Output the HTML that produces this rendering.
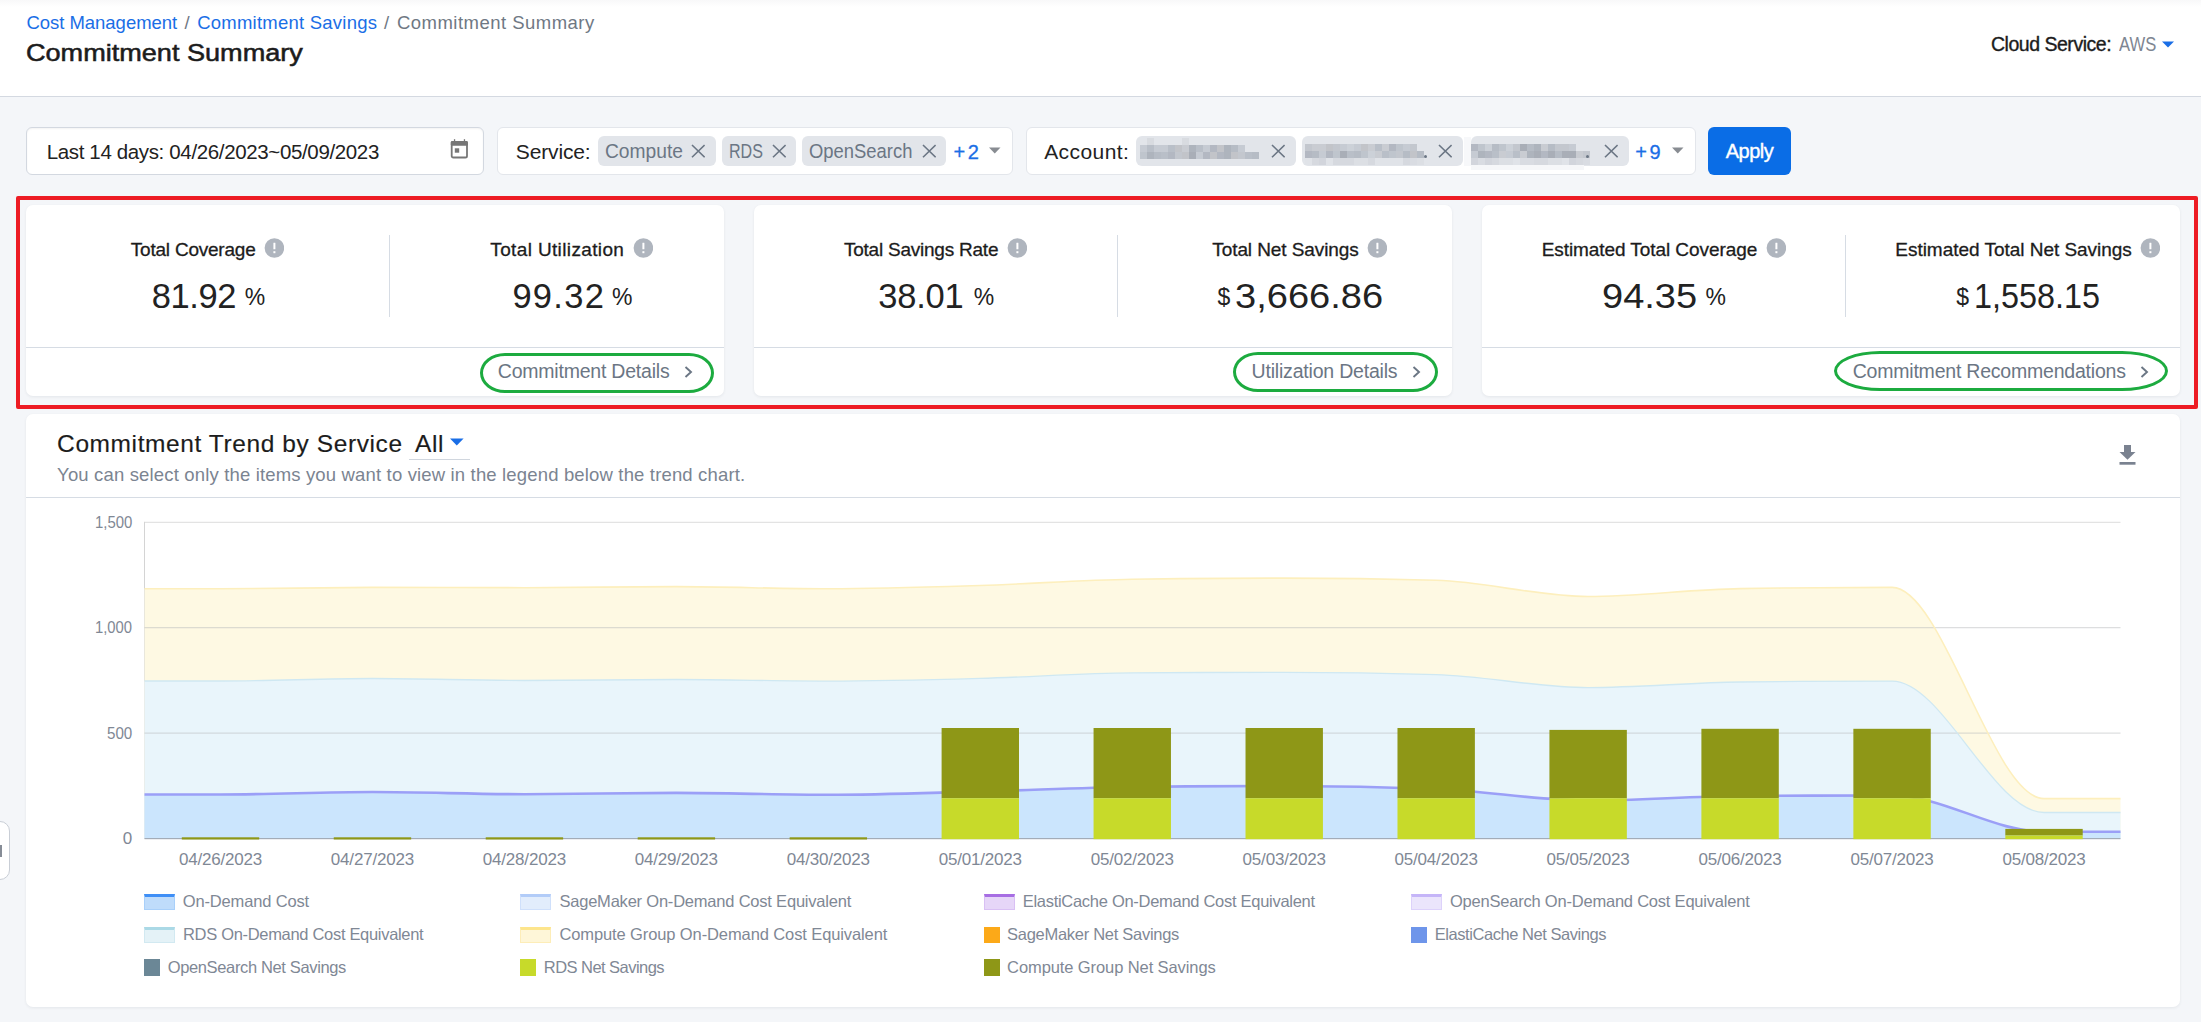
<!DOCTYPE html>
<html><head><meta charset="utf-8"><title>Commitment Summary</title>
<style>
html,body{margin:0;padding:0;}
body{width:2201px;height:1022px;overflow:hidden;position:relative;background:#f4f6f9;font-family:"Liberation Sans",sans-serif;}
.a{position:absolute;}
.t{position:absolute;white-space:nowrap;font-family:"Liberation Sans",sans-serif;}
</style></head><body>
<div class="a" style="left:0px;top:0px;width:2201px;height:96px;background:linear-gradient(#f8f8f9 0px,#ffffff 7px);"></div>
<div class="a" style="left:0px;top:96px;width:2201px;height:1px;background:#d4d9e1;"></div>
<span class="t" style="left:26.40px;top:14.42px;font-size:18.5px;line-height:18.5px;color:#1a6ee6;letter-spacing:-0.025px;">Cost Management</span>
<span class="t" style="left:184.50px;top:14.42px;font-size:18.5px;line-height:18.5px;color:#6f7884;">/</span>
<span class="t" style="left:197.20px;top:14.42px;font-size:18.5px;line-height:18.5px;color:#1a6ee6;letter-spacing:0.232px;">Commitment Savings</span>
<span class="t" style="left:383.90px;top:14.42px;font-size:18.5px;line-height:18.5px;color:#6f7884;">/</span>
<span class="t" style="left:397.00px;top:14.42px;font-size:18.5px;line-height:18.5px;color:#6f7884;letter-spacing:0.472px;">Commitment Summary</span>
<span class="t" style="left:26.40px;top:40.60px;font-size:24.5px;line-height:24.5px;color:#1c1c1c;transform:scaleX(1.1051);transform-origin:0 0;-webkit-text-stroke:0.55px #1c1c1c;">Commitment Summary</span>
<span class="t" style="left:1991.00px;top:34.91px;font-size:19.5px;line-height:19.5px;color:#1c1c1c;letter-spacing:-0.481px;-webkit-text-stroke:0.35px #1c1c1c;">Cloud Service:</span>
<span class="t" style="left:2119.00px;top:34.91px;font-size:19.5px;line-height:19.5px;color:#7e8692;transform:scaleX(0.8516);transform-origin:0 0;">AWS</span>
<svg class="a" style="left:2162px;top:41px" width="13" height="7"><path d="M0 0.5H12L6 6.5Z" fill="#1a6ee6"/></svg>
<div class="a" style="left:26px;top:127px;width:458px;height:48px;background:#fff;border:1px solid #d3d8e0;border-radius:6px;box-sizing:border-box;box-shadow:inset 0 1px 2px rgba(0,0,0,0.05);"></div>
<span class="t" style="left:46.70px;top:142.02px;font-size:20.5px;line-height:20.5px;color:#222;letter-spacing:-0.359px;">Last 14 days: 04/26/2023~05/09/2023</span>
<svg class="a" style="left:450px;top:138px" width="19" height="22" viewBox="0 0 19 22"><rect x="1.7" y="3.9" width="15.3" height="15.6" rx="1.6" fill="none" stroke="#777" stroke-width="1.8"/><rect x="0.8" y="3" width="17.1" height="4.8" rx="1.2" fill="#777"/><rect x="3.9" y="1.2" width="1.3" height="2.4" fill="#777"/><rect x="13.8" y="1.2" width="1.3" height="2.4" fill="#777"/><rect x="4.8" y="10.3" width="4.4" height="4.4" fill="#777"/></svg>
<div class="a" style="left:497px;top:127px;width:516px;height:48px;background:#fff;border:1px solid #e3e6eb;border-radius:6px;box-sizing:border-box;"></div>
<span class="t" style="left:515.80px;top:140.70px;font-size:21px;line-height:21px;color:#222;letter-spacing:-0.144px;">Service:</span>
<div class="a" style="left:598px;top:136px;width:118px;height:30px;background:#e2e5ea;border-radius:6px;"></div>
<span class="t" style="left:604.70px;top:141.02px;font-size:20.5px;line-height:20.5px;color:#6b7684;transform:scaleX(0.9372);transform-origin:0 0;">Compute</span>
<svg class="a" style="left:691.2px;top:144px" width="14" height="14" viewBox="0 0 14 14"><path d="M1 1L13.6 13.3M13.6 1L1 13.3" stroke="#6b7684" stroke-width="1.6"/></svg>
<div class="a" style="left:722px;top:136px;width:74px;height:30px;background:#e2e5ea;border-radius:6px;"></div>
<span class="t" style="left:728.90px;top:141.02px;font-size:20.5px;line-height:20.5px;color:#6b7684;transform:scaleX(0.7837);transform-origin:0 0;">RDS</span>
<svg class="a" style="left:771.5px;top:144px" width="14" height="14" viewBox="0 0 14 14"><path d="M1 1L13.6 13.3M13.6 1L1 13.3" stroke="#6b7684" stroke-width="1.6"/></svg>
<div class="a" style="left:802px;top:136px;width:144px;height:30px;background:#e2e5ea;border-radius:6px;"></div>
<span class="t" style="left:809.20px;top:141.02px;font-size:20.5px;line-height:20.5px;color:#6b7684;transform:scaleX(0.8982);transform-origin:0 0;">OpenSearch</span>
<svg class="a" style="left:921.6px;top:144px" width="14" height="14" viewBox="0 0 14 14"><path d="M1 1L13.6 13.3M13.6 1L1 13.3" stroke="#6b7684" stroke-width="1.6"/></svg>
<span class="t" style="left:953.40px;top:141.52px;font-size:20px;line-height:20px;color:#1a6ee6;-webkit-text-stroke:0.3px #1a6ee6;">+</span>
<span class="t" style="left:967.80px;top:141.52px;font-size:20px;line-height:20px;color:#1a6ee6;-webkit-text-stroke:0.3px #1a6ee6;">2</span>
<svg class="a" style="left:989px;top:147px" width="12" height="7"><path d="M0 0.5H11.5L5.75 6.5Z" fill="#888c92"/></svg>
<div class="a" style="left:1026px;top:127px;width:670px;height:48px;background:#fff;border:1px solid #e3e6eb;border-radius:6px;box-sizing:border-box;"></div>
<span class="t" style="left:1044.20px;top:140.70px;font-size:21px;line-height:21px;color:#222;letter-spacing:0.416px;">Account:</span>
<div class="a" style="left:1136px;top:136px;width:160px;height:30px;background:#e2e5ea;border-radius:6px;"></div>
<div class="a" style="left:1140.0px;top:145.0px;width:7px;height:7px;background:#c6cbd3"></div><div class="a" style="left:1147.0px;top:145.0px;width:7px;height:7px;background:#b9bfc8"></div><div class="a" style="left:1154.0px;top:145.0px;width:7px;height:7px;background:#c6cbd3"></div><div class="a" style="left:1161.0px;top:145.0px;width:7px;height:7px;background:#c6cbd3"></div><div class="a" style="left:1168.0px;top:145.0px;width:7px;height:7px;background:#b9bfc8"></div><div class="a" style="left:1175.0px;top:145.0px;width:7px;height:7px;background:#c2c4c9"></div><div class="a" style="left:1182.0px;top:145.0px;width:7px;height:7px;background:#c9ccd2"></div><div class="a" style="left:1189.0px;top:145.0px;width:7px;height:7px;background:#aeb4bd"></div><div class="a" style="left:1196.0px;top:145.0px;width:7px;height:7px;background:#b9bfc8"></div><div class="a" style="left:1203.0px;top:145.0px;width:7px;height:7px;background:#c6cbd3"></div><div class="a" style="left:1210.0px;top:145.0px;width:7px;height:7px;background:#b3b8c2"></div><div class="a" style="left:1217.0px;top:145.0px;width:7px;height:7px;background:#c2c4c9"></div><div class="a" style="left:1224.0px;top:145.0px;width:7px;height:7px;background:#aeb4bd"></div><div class="a" style="left:1231.0px;top:145.0px;width:7px;height:7px;background:#b6bcc5"></div><div class="a" style="left:1238.0px;top:145.0px;width:7px;height:7px;background:#c6cbd3"></div><div class="a" style="left:1140.0px;top:152.0px;width:7px;height:7px;background:#bfc5cd"></div><div class="a" style="left:1147.0px;top:152.0px;width:7px;height:7px;background:#aeb4bd"></div><div class="a" style="left:1154.0px;top:152.0px;width:7px;height:7px;background:#b6bcc5"></div><div class="a" style="left:1161.0px;top:152.0px;width:7px;height:7px;background:#b9bfc8"></div><div class="a" style="left:1168.0px;top:152.0px;width:7px;height:7px;background:#b3b8c2"></div><div class="a" style="left:1175.0px;top:152.0px;width:7px;height:7px;background:#c3c7ce"></div><div class="a" style="left:1182.0px;top:152.0px;width:7px;height:7px;background:#c2c4c9"></div><div class="a" style="left:1189.0px;top:152.0px;width:7px;height:7px;background:#a9aeb7"></div><div class="a" style="left:1196.0px;top:152.0px;width:7px;height:7px;background:#c6cbd3"></div><div class="a" style="left:1203.0px;top:152.0px;width:7px;height:7px;background:#b3b8c2"></div><div class="a" style="left:1210.0px;top:152.0px;width:7px;height:7px;background:#c2c4c9"></div><div class="a" style="left:1217.0px;top:152.0px;width:7px;height:7px;background:#b3b8c2"></div><div class="a" style="left:1224.0px;top:152.0px;width:7px;height:7px;background:#aeb4bd"></div><div class="a" style="left:1231.0px;top:152.0px;width:7px;height:7px;background:#c2c4c9"></div><div class="a" style="left:1238.0px;top:152.0px;width:7px;height:7px;background:#c3c7ce"></div><div class="a" style="left:1245.0px;top:152.0px;width:7px;height:7px;background:#b9bfc8"></div><div class="a" style="left:1252.0px;top:152.0px;width:7px;height:7px;background:#b6bcc5"></div><div class="a" style="left:1147.0px;top:137.8px;width:7px;height:7px;background:#d6d9df"></div>
<div class="a" style="left:1147px;top:137.8px;width:7px;height:7px;background:#d8dbe0;"></div>
<div class="a" style="left:1182px;top:137.8px;width:7px;height:7px;background:#d8dbe0;"></div>
<svg class="a" style="left:1271px;top:144px" width="14" height="14" viewBox="0 0 14 14"><path d="M1 1L13.6 13.3M13.6 1L1 13.3" stroke="#6b7684" stroke-width="1.6"/></svg>
<div class="a" style="left:1302px;top:136px;width:161px;height:30px;background:#e2e5ea;border-radius:6px;"></div>
<div class="a" style="left:1305.0px;top:143.9px;width:7px;height:7px;background:#c3c7ce"></div><div class="a" style="left:1312.0px;top:143.9px;width:7px;height:7px;background:#c9ccd2"></div><div class="a" style="left:1319.0px;top:143.9px;width:7px;height:7px;background:#c9ccd2"></div><div class="a" style="left:1326.0px;top:143.9px;width:7px;height:7px;background:#c2c4c9"></div><div class="a" style="left:1333.0px;top:143.9px;width:7px;height:7px;background:#c3c7ce"></div><div class="a" style="left:1340.0px;top:143.9px;width:7px;height:7px;background:#c6cbd3"></div><div class="a" style="left:1347.0px;top:143.9px;width:7px;height:7px;background:#ccd1d8"></div><div class="a" style="left:1354.0px;top:143.9px;width:7px;height:7px;background:#c6cbd3"></div><div class="a" style="left:1361.0px;top:143.9px;width:7px;height:7px;background:#c2c4c9"></div><div class="a" style="left:1368.0px;top:143.9px;width:7px;height:7px;background:#c9ccd2"></div><div class="a" style="left:1375.0px;top:143.9px;width:7px;height:7px;background:#b9bfc8"></div><div class="a" style="left:1382.0px;top:143.9px;width:7px;height:7px;background:#c9ccd2"></div><div class="a" style="left:1389.0px;top:143.9px;width:7px;height:7px;background:#b3b8c2"></div><div class="a" style="left:1396.0px;top:143.9px;width:7px;height:7px;background:#bfc5cd"></div><div class="a" style="left:1403.0px;top:143.9px;width:7px;height:7px;background:#c6cbd3"></div><div class="a" style="left:1410.0px;top:143.9px;width:7px;height:7px;background:#c3c7ce"></div><div class="a" style="left:1305.0px;top:150.9px;width:7px;height:7px;background:#b3b8c2"></div><div class="a" style="left:1312.0px;top:150.9px;width:7px;height:7px;background:#b6bcc5"></div><div class="a" style="left:1319.0px;top:150.9px;width:7px;height:7px;background:#c6cbd3"></div><div class="a" style="left:1326.0px;top:150.9px;width:7px;height:7px;background:#b3b8c2"></div><div class="a" style="left:1333.0px;top:150.9px;width:7px;height:7px;background:#bfc5cd"></div><div class="a" style="left:1340.0px;top:150.9px;width:7px;height:7px;background:#a9aeb7"></div><div class="a" style="left:1347.0px;top:150.9px;width:7px;height:7px;background:#b9bfc8"></div><div class="a" style="left:1354.0px;top:150.9px;width:7px;height:7px;background:#b6bcc5"></div><div class="a" style="left:1361.0px;top:150.9px;width:7px;height:7px;background:#bfc5cd"></div><div class="a" style="left:1368.0px;top:150.9px;width:7px;height:7px;background:#ccd1d8"></div><div class="a" style="left:1375.0px;top:150.9px;width:7px;height:7px;background:#c9ccd2"></div><div class="a" style="left:1382.0px;top:150.9px;width:7px;height:7px;background:#b9bfc8"></div><div class="a" style="left:1389.0px;top:150.9px;width:7px;height:7px;background:#bfc5cd"></div><div class="a" style="left:1396.0px;top:150.9px;width:7px;height:7px;background:#c3c7ce"></div><div class="a" style="left:1403.0px;top:150.9px;width:7px;height:7px;background:#b6bcc5"></div><div class="a" style="left:1410.0px;top:150.9px;width:7px;height:7px;background:#c2c4c9"></div><div class="a" style="left:1417.0px;top:150.9px;width:7px;height:7px;background:#b6bcc5"></div><div class="a" style="left:1305.0px;top:157.9px;width:7px;height:7px;background:#e0e3e8"></div><div class="a" style="left:1312.0px;top:157.9px;width:7px;height:7px;background:#d6d9df"></div><div class="a" style="left:1319.0px;top:157.9px;width:7px;height:7px;background:#d2d5dc"></div><div class="a" style="left:1326.0px;top:157.9px;width:7px;height:7px;background:#e0e3e8"></div><div class="a" style="left:1333.0px;top:157.9px;width:7px;height:7px;background:#d6d9df"></div><div class="a" style="left:1340.0px;top:157.9px;width:7px;height:7px;background:#d6d9df"></div><div class="a" style="left:1347.0px;top:157.9px;width:7px;height:7px;background:#d6d9df"></div><div class="a" style="left:1354.0px;top:157.9px;width:7px;height:7px;background:#dcdfe4"></div><div class="a" style="left:1361.0px;top:157.9px;width:7px;height:7px;background:#dcdfe4"></div><div class="a" style="left:1368.0px;top:157.9px;width:7px;height:7px;background:#d6d9df"></div><div class="a" style="left:1375.0px;top:157.9px;width:7px;height:7px;background:#e0e3e8"></div><div class="a" style="left:1382.0px;top:157.9px;width:7px;height:7px;background:#e0e3e8"></div><div class="a" style="left:1389.0px;top:157.9px;width:7px;height:7px;background:#e0e3e8"></div><div class="a" style="left:1396.0px;top:157.9px;width:7px;height:7px;background:#e0e3e8"></div><div class="a" style="left:1403.0px;top:157.9px;width:7px;height:7px;background:#d6d9df"></div><div class="a" style="left:1410.0px;top:157.9px;width:7px;height:7px;background:#d9dce2"></div><div class="a" style="left:1417.0px;top:157.9px;width:7px;height:7px;background:#dcdfe4"></div>
<div class="a" style="left:1424px;top:155px;width:3px;height:3px;background:#6b7684;border-radius:50%;"></div>
<svg class="a" style="left:1438px;top:144px" width="14" height="14" viewBox="0 0 14 14"><path d="M1 1L13.6 13.3M13.6 1L1 13.3" stroke="#6b7684" stroke-width="1.6"/></svg>
<div class="a" style="left:1471px;top:136px;width:158px;height:30px;background:#e2e5ea;border-radius:6px;"></div>
<div class="a" style="left:1464px;top:137px;width:7px;height:29px;background:#f7f8fa;"></div>
<div class="a" style="left:1471.2px;top:143.9px;width:7px;height:7px;background:#b3b8c2"></div><div class="a" style="left:1478.2px;top:143.9px;width:7px;height:7px;background:#bfc5cd"></div><div class="a" style="left:1485.2px;top:143.9px;width:7px;height:7px;background:#ccd1d8"></div><div class="a" style="left:1492.2px;top:143.9px;width:7px;height:7px;background:#b6bcc5"></div><div class="a" style="left:1499.2px;top:143.9px;width:7px;height:7px;background:#bfc5cd"></div><div class="a" style="left:1506.2px;top:143.9px;width:7px;height:7px;background:#ccd1d8"></div><div class="a" style="left:1513.2px;top:143.9px;width:7px;height:7px;background:#c3c7ce"></div><div class="a" style="left:1520.2px;top:143.9px;width:7px;height:7px;background:#a9aeb7"></div><div class="a" style="left:1527.2px;top:143.9px;width:7px;height:7px;background:#b6bcc5"></div><div class="a" style="left:1534.2px;top:143.9px;width:7px;height:7px;background:#aeb4bd"></div><div class="a" style="left:1541.2px;top:143.9px;width:7px;height:7px;background:#c9ccd2"></div><div class="a" style="left:1548.2px;top:143.9px;width:7px;height:7px;background:#b6bcc5"></div><div class="a" style="left:1555.2px;top:143.9px;width:7px;height:7px;background:#c3c7ce"></div><div class="a" style="left:1562.2px;top:143.9px;width:7px;height:7px;background:#c3c7ce"></div><div class="a" style="left:1569.2px;top:143.9px;width:7px;height:7px;background:#c6cbd3"></div><div class="a" style="left:1471.2px;top:150.8px;width:7px;height:7px;background:#c6cbd3"></div><div class="a" style="left:1478.2px;top:150.8px;width:7px;height:7px;background:#aeb4bd"></div><div class="a" style="left:1485.2px;top:150.8px;width:7px;height:7px;background:#b3b8c2"></div><div class="a" style="left:1492.2px;top:150.8px;width:7px;height:7px;background:#b9bfc8"></div><div class="a" style="left:1499.2px;top:150.8px;width:7px;height:7px;background:#c9ccd2"></div><div class="a" style="left:1506.2px;top:150.8px;width:7px;height:7px;background:#c6cbd3"></div><div class="a" style="left:1513.2px;top:150.8px;width:7px;height:7px;background:#b9bfc8"></div><div class="a" style="left:1520.2px;top:150.8px;width:7px;height:7px;background:#c9ccd2"></div><div class="a" style="left:1527.2px;top:150.8px;width:7px;height:7px;background:#aeb4bd"></div><div class="a" style="left:1534.2px;top:150.8px;width:7px;height:7px;background:#a9aeb7"></div><div class="a" style="left:1541.2px;top:150.8px;width:7px;height:7px;background:#b3b8c2"></div><div class="a" style="left:1548.2px;top:150.8px;width:7px;height:7px;background:#a9aeb7"></div><div class="a" style="left:1555.2px;top:150.8px;width:7px;height:7px;background:#b6bcc5"></div><div class="a" style="left:1562.2px;top:150.8px;width:7px;height:7px;background:#a9aeb7"></div><div class="a" style="left:1569.2px;top:150.8px;width:7px;height:7px;background:#a9aeb7"></div><div class="a" style="left:1576.2px;top:150.8px;width:7px;height:7px;background:#c9ccd2"></div><div class="a" style="left:1583.2px;top:150.8px;width:7px;height:7px;background:#c3c7ce"></div><div class="a" style="left:1471.2px;top:157.8px;width:7px;height:7px;background:#d2d5dc"></div><div class="a" style="left:1478.2px;top:157.8px;width:7px;height:7px;background:#d9dce2"></div><div class="a" style="left:1485.2px;top:157.8px;width:7px;height:7px;background:#d2d5dc"></div><div class="a" style="left:1492.2px;top:157.8px;width:7px;height:7px;background:#d6d9df"></div><div class="a" style="left:1499.2px;top:157.8px;width:7px;height:7px;background:#dcdfe4"></div><div class="a" style="left:1506.2px;top:157.8px;width:7px;height:7px;background:#dcdfe4"></div><div class="a" style="left:1513.2px;top:157.8px;width:7px;height:7px;background:#e0e3e8"></div><div class="a" style="left:1520.2px;top:157.8px;width:7px;height:7px;background:#d9dce2"></div><div class="a" style="left:1527.2px;top:157.8px;width:7px;height:7px;background:#d9dce2"></div><div class="a" style="left:1534.2px;top:157.8px;width:7px;height:7px;background:#d6d9df"></div><div class="a" style="left:1541.2px;top:157.8px;width:7px;height:7px;background:#d6d9df"></div><div class="a" style="left:1548.2px;top:157.8px;width:7px;height:7px;background:#dcdfe4"></div><div class="a" style="left:1555.2px;top:157.8px;width:7px;height:7px;background:#dcdfe4"></div><div class="a" style="left:1562.2px;top:157.8px;width:7px;height:7px;background:#e0e3e8"></div><div class="a" style="left:1569.2px;top:157.8px;width:7px;height:7px;background:#d2d5dc"></div><div class="a" style="left:1576.2px;top:157.8px;width:7px;height:7px;background:#d6d9df"></div><div class="a" style="left:1583.2px;top:157.8px;width:7px;height:7px;background:#d9dce2"></div>
<div class="a" style="left:1471px;top:164.7px;width:113px;height:5px;background:#f6f7f9;"></div>
<div class="a" style="left:1586px;top:155px;width:3px;height:3px;background:#6b7684;border-radius:50%;"></div>
<svg class="a" style="left:1604px;top:144px" width="14" height="14" viewBox="0 0 14 14"><path d="M1 1L13.6 13.3M13.6 1L1 13.3" stroke="#6b7684" stroke-width="1.6"/></svg>
<span class="t" style="left:1635.20px;top:141.52px;font-size:20px;line-height:20px;color:#1a6ee6;-webkit-text-stroke:0.3px #1a6ee6;">+</span>
<span class="t" style="left:1649.50px;top:141.52px;font-size:20px;line-height:20px;color:#1a6ee6;-webkit-text-stroke:0.3px #1a6ee6;">9</span>
<svg class="a" style="left:1672px;top:147px" width="12" height="7"><path d="M0 0.5H11.5L5.75 6.5Z" fill="#888c92"/></svg>
<div class="a" style="left:1708px;top:127px;width:83px;height:48px;background:#0a6de6;border-radius:6px;"></div>
<span class="t" style="left:1725.80px;top:141.22px;font-size:20px;line-height:20px;color:#ffffff;letter-spacing:-0.525px;-webkit-text-stroke:0.4px #ffffff;">Apply</span>
<div class="a" style="left:26px;top:205px;width:698px;height:191px;background:#fff;border-radius:7px;box-shadow:0 1px 3px rgba(40,50,70,0.08);"></div>
<div class="a" style="left:26px;top:347px;width:698px;height:1px;background:#d6dce4;"></div>
<div class="a" style="left:389px;top:235px;width:1px;height:82px;background:#d6dce4;"></div>
<div class="a" style="left:754px;top:205px;width:698px;height:191px;background:#fff;border-radius:7px;box-shadow:0 1px 3px rgba(40,50,70,0.08);"></div>
<div class="a" style="left:754px;top:347px;width:698px;height:1px;background:#d6dce4;"></div>
<div class="a" style="left:1117px;top:235px;width:1px;height:82px;background:#d6dce4;"></div>
<div class="a" style="left:1482px;top:205px;width:698px;height:191px;background:#fff;border-radius:7px;box-shadow:0 1px 3px rgba(40,50,70,0.08);"></div>
<div class="a" style="left:1482px;top:347px;width:698px;height:1px;background:#d6dce4;"></div>
<div class="a" style="left:1845px;top:235px;width:1px;height:82px;background:#d6dce4;"></div>
<span class="t" style="left:130.80px;top:239.62px;font-size:19px;line-height:19px;color:#1c1c1c;letter-spacing:-0.221px;-webkit-text-stroke:0.3px #1c1c1c;">Total Coverage</span>
<svg class="a" style="left:264.3px;top:237.9px" width="20" height="20" viewBox="0 0 20 20"><circle cx="10.4" cy="10" r="9.8" fill="#afb5be"/><rect x="9.4" y="4.8" width="2" height="6.4" rx="0.3" fill="#fff"/><rect x="9.4" y="13.2" width="2" height="2" fill="#fff"/></svg>
<span class="t" style="left:490.30px;top:239.82px;font-size:19px;line-height:19px;color:#1c1c1c;letter-spacing:0.364px;-webkit-text-stroke:0.3px #1c1c1c;">Total Utilization</span>
<svg class="a" style="left:632.8px;top:238px" width="20" height="20" viewBox="0 0 20 20"><circle cx="10.4" cy="10" r="9.8" fill="#afb5be"/><rect x="9.4" y="4.8" width="2" height="6.4" rx="0.3" fill="#fff"/><rect x="9.4" y="13.2" width="2" height="2" fill="#fff"/></svg>
<span class="t" style="left:843.90px;top:239.82px;font-size:19px;line-height:19px;color:#1c1c1c;letter-spacing:-0.227px;-webkit-text-stroke:0.3px #1c1c1c;">Total Savings Rate</span>
<svg class="a" style="left:1006.9px;top:237.9px" width="20" height="20" viewBox="0 0 20 20"><circle cx="10.4" cy="10" r="9.8" fill="#afb5be"/><rect x="9.4" y="4.8" width="2" height="6.4" rx="0.3" fill="#fff"/><rect x="9.4" y="13.2" width="2" height="2" fill="#fff"/></svg>
<span class="t" style="left:1212.30px;top:239.82px;font-size:19px;line-height:19px;color:#1c1c1c;letter-spacing:-0.089px;-webkit-text-stroke:0.3px #1c1c1c;">Total Net Savings</span>
<svg class="a" style="left:1367px;top:237.9px" width="20" height="20" viewBox="0 0 20 20"><circle cx="10.4" cy="10" r="9.8" fill="#afb5be"/><rect x="9.4" y="4.8" width="2" height="6.4" rx="0.3" fill="#fff"/><rect x="9.4" y="13.2" width="2" height="2" fill="#fff"/></svg>
<span class="t" style="left:1541.70px;top:239.82px;font-size:19px;line-height:19px;color:#1c1c1c;letter-spacing:-0.073px;-webkit-text-stroke:0.3px #1c1c1c;">Estimated Total Coverage</span>
<svg class="a" style="left:1766px;top:237.9px" width="20" height="20" viewBox="0 0 20 20"><circle cx="10.4" cy="10" r="9.8" fill="#afb5be"/><rect x="9.4" y="4.8" width="2" height="6.4" rx="0.3" fill="#fff"/><rect x="9.4" y="13.2" width="2" height="2" fill="#fff"/></svg>
<span class="t" style="left:1895.30px;top:239.82px;font-size:19px;line-height:19px;color:#1c1c1c;letter-spacing:-0.027px;-webkit-text-stroke:0.3px #1c1c1c;">Estimated Total Net Savings</span>
<svg class="a" style="left:2140.4px;top:237.9px" width="20" height="20" viewBox="0 0 20 20"><circle cx="10.4" cy="10" r="9.8" fill="#afb5be"/><rect x="9.4" y="4.8" width="2" height="6.4" rx="0.3" fill="#fff"/><rect x="9.4" y="13.2" width="2" height="2" fill="#fff"/></svg>
<span class="t" style="left:151.80px;top:278.70px;font-size:34.5px;line-height:34.5px;color:#222;letter-spacing:-0.413px;">81.92</span>
<span class="t" style="left:244.70px;top:285.61px;font-size:23px;line-height:23px;color:#222;">%</span>
<span class="t" style="left:512.40px;top:278.70px;font-size:34.5px;line-height:34.5px;color:#222;letter-spacing:1.288px;">99.32</span>
<span class="t" style="left:612.00px;top:285.61px;font-size:23px;line-height:23px;color:#222;">%</span>
<span class="t" style="left:878.30px;top:278.70px;font-size:34.5px;line-height:34.5px;color:#222;letter-spacing:-0.238px;">38.01</span>
<span class="t" style="left:973.80px;top:285.61px;font-size:23px;line-height:23px;color:#222;">%</span>
<span class="t" style="left:1217.50px;top:286.01px;font-size:23px;line-height:23px;color:#222;">$</span>
<span class="t" style="left:1235.40px;top:278.70px;font-size:34.5px;line-height:34.5px;color:#222;transform:scaleX(1.1028);transform-origin:0 0;">3,666.86</span>
<span class="t" style="left:1602.40px;top:278.70px;font-size:34.5px;line-height:34.5px;color:#222;transform:scaleX(1.1014);transform-origin:0 0;">94.35</span>
<span class="t" style="left:1705.40px;top:285.61px;font-size:23px;line-height:23px;color:#222;">%</span>
<span class="t" style="left:1956.30px;top:286.01px;font-size:23px;line-height:23px;color:#222;">$</span>
<span class="t" style="left:1974.00px;top:278.70px;font-size:34.5px;line-height:34.5px;color:#222;transform:scaleX(0.9389);transform-origin:0 0;">1,558.15</span>
<span class="t" style="left:497.80px;top:362.41px;font-size:19.5px;line-height:19.5px;color:#6b7684;letter-spacing:-0.218px;">Commitment Details</span>
<svg class="a" style="left:684px;top:366px" width="9" height="12" viewBox="0 0 9 12"><path d="M1.5 1L7 6L1.5 11" fill="none" stroke="#6b7684" stroke-width="1.9"/></svg>
<div class="a" style="left:480px;top:352.5px;width:234px;height:40.5px;border:3.4px solid #1cab3f;border-radius:25px / 20px;box-sizing:border-box;"></div>
<span class="t" style="left:1251.60px;top:362.41px;font-size:19.5px;line-height:19.5px;color:#6b7684;letter-spacing:-0.198px;">Utilization Details</span>
<svg class="a" style="left:1412px;top:366px" width="9" height="12" viewBox="0 0 9 12"><path d="M1.5 1L7 6L1.5 11" fill="none" stroke="#6b7684" stroke-width="1.9"/></svg>
<div class="a" style="left:1232.5px;top:351.5px;width:205.0999999999999px;height:40.80000000000001px;border:3.4px solid #1cab3f;border-radius:25px / 20px;box-sizing:border-box;"></div>
<span class="t" style="left:1852.70px;top:362.41px;font-size:19.5px;line-height:19.5px;color:#6b7684;letter-spacing:-0.210px;">Commitment Recommendations</span>
<svg class="a" style="left:2139.5px;top:366px" width="9" height="12" viewBox="0 0 9 12"><path d="M1.5 1L7 6L1.5 11" fill="none" stroke="#6b7684" stroke-width="1.9"/></svg>
<div class="a" style="left:1834.4px;top:350.6px;width:334.0px;height:40.099999999999966px;border:3.4px solid #1cab3f;border-radius:46px / 20px;box-sizing:border-box;"></div>
<div class="a" style="left:16px;top:196px;width:2182px;height:213px;border:4px solid #ed1c24;border-radius:2px;box-sizing:border-box;"></div>
<div class="a" style="left:26px;top:414px;width:2154px;height:593px;background:#fff;border-radius:7px;box-shadow:0 1px 3px rgba(40,50,70,0.08);"></div>
<div class="a" style="left:26px;top:497px;width:2154px;height:1.3px;background:#d6dce4;"></div>
<span class="t" style="left:57.10px;top:432.00px;font-size:24.5px;line-height:24.5px;color:#1c1c1c;letter-spacing:0.595px;-webkit-text-stroke:0.15px #1c1c1c;">Commitment Trend by Service</span>
<span class="t" style="left:415.10px;top:432.00px;font-size:24.5px;line-height:24.5px;color:#1c1c1c;letter-spacing:0.502px;-webkit-text-stroke:0.15px #1c1c1c;">All</span>
<svg class="a" style="left:450px;top:437.5px" width="14" height="8"><path d="M0 0.5H13.6L6.8 7.5Z" fill="#1a6ee6"/></svg>
<div class="a" style="left:409px;top:459px;width:61px;height:1px;background:#d0d6de;"></div>
<span class="t" style="left:57.10px;top:465.62px;font-size:18.5px;line-height:18.5px;color:#7b8491;letter-spacing:0.160px;">You can select only the items you want to view in the legend below the trend chart.</span>
<svg class="a" style="left:2119px;top:444px" width="17" height="22" viewBox="0 0 17 22"><rect x="5" y="1" width="7" height="7" fill="#7a8290"/><path d="M0.5 8H16.5L8.5 15.8Z" fill="#7a8290"/><rect x="0.5" y="18" width="16" height="2.7" fill="#7a8290"/></svg>
<div class="a" style="left:-20px;top:821px;width:30px;height:59px;background:#fff;border:1px solid #c9ced6;border-radius:10px;box-sizing:border-box;"></div>
<div class="a" style="left:0px;top:845px;width:2px;height:12px;background:#868c96;"></div>
<svg class="a" style="left:0;top:0" width="2201" height="1022" viewBox="0 0 2201 1022"><rect x="144.5" y="521.80" width="1976.0" height="1" fill="#dcdcdc"/><rect x="144.0" y="521.80" width="1" height="316.70" fill="#d4d4d4"/><path d="M144.50,588.80C169.83,588.80 195.17,588.80 220.50,588.80C271.15,588.80 321.81,587.40 372.46,587.40C423.11,587.40 473.77,587.70 524.42,587.70C575.07,587.70 625.73,586.60 676.38,586.60C727.03,586.60 777.69,588.80 828.34,588.80C878.99,588.80 929.65,587.10 980.30,585.50C1030.95,583.90 1081.61,579.93 1132.26,579.20C1182.91,578.47 1233.57,578.10 1284.22,578.10C1334.87,578.10 1385.53,578.83 1436.18,580.30C1486.83,581.77 1537.49,596.50 1588.14,596.50C1638.79,596.50 1689.45,589.40 1740.10,588.60C1790.75,587.80 1841.41,587.40 1892.06,587.40C1942.71,587.40 1993.37,798.60 2044.02,798.60C2069.51,798.60 2095.01,798.60 2120.50,798.60L2120.5,838.5L144.5,838.5Z" fill="#fef9e3"/><path d="M144.50,681.00C169.83,681.00 195.17,681.00 220.50,681.00C271.15,681.00 321.81,678.50 372.46,678.50C423.11,678.50 473.77,680.50 524.42,680.50C575.07,680.50 625.73,679.50 676.38,679.50C727.03,679.50 777.69,681.10 828.34,681.10C878.99,681.10 929.65,679.77 980.30,678.40C1030.95,677.03 1081.61,673.30 1132.26,672.90C1182.91,672.50 1233.57,672.30 1284.22,672.30C1334.87,672.30 1385.53,673.07 1436.18,674.60C1486.83,676.13 1537.49,687.60 1588.14,687.60C1638.79,687.60 1689.45,682.60 1740.10,682.00C1790.75,681.40 1841.41,681.10 1892.06,681.10C1942.71,681.10 1993.37,812.50 2044.02,812.50C2069.51,812.50 2095.01,812.50 2120.50,812.50L2120.5,838.5L144.5,838.5Z" fill="#e9f5fb"/><path d="M144.50,794.50C169.83,794.50 195.17,794.50 220.50,794.50C271.15,794.50 321.81,792.00 372.46,792.00C423.11,792.00 473.77,794.20 524.42,794.20C575.07,794.20 625.73,792.90 676.38,792.90C727.03,792.90 777.69,794.80 828.34,794.80C878.99,794.80 929.65,792.80 980.30,791.50C1030.95,790.20 1081.61,787.67 1132.26,787.00C1182.91,786.33 1233.57,786.00 1284.22,786.00C1334.87,786.00 1385.53,787.00 1436.18,789.00C1486.83,791.00 1537.49,800.50 1588.14,800.50C1638.79,800.50 1689.45,796.33 1740.10,796.00C1790.75,795.67 1841.41,795.50 1892.06,795.50C1942.71,795.50 1993.37,831.80 2044.02,831.80C2069.51,831.80 2095.01,831.80 2120.50,831.80L2120.5,838.5L144.5,838.5Z" fill="#cbe5fd"/><rect x="144.5" y="732.60" width="1976.0" height="1" fill="#b9bcbe" fill-opacity="0.6"/><rect x="144.5" y="627.20" width="1976.0" height="1" fill="#b9bcbe" fill-opacity="0.6"/><path d="M144.50,588.80C169.83,588.80 195.17,588.80 220.50,588.80C271.15,588.80 321.81,587.40 372.46,587.40C423.11,587.40 473.77,587.70 524.42,587.70C575.07,587.70 625.73,586.60 676.38,586.60C727.03,586.60 777.69,588.80 828.34,588.80C878.99,588.80 929.65,587.10 980.30,585.50C1030.95,583.90 1081.61,579.93 1132.26,579.20C1182.91,578.47 1233.57,578.10 1284.22,578.10C1334.87,578.10 1385.53,578.83 1436.18,580.30C1486.83,581.77 1537.49,596.50 1588.14,596.50C1638.79,596.50 1689.45,589.40 1740.10,588.60C1790.75,587.80 1841.41,587.40 1892.06,587.40C1942.71,587.40 1993.37,798.60 2044.02,798.60C2069.51,798.60 2095.01,798.60 2120.50,798.60" fill="none" stroke="#fdefbd" stroke-width="1.6"/><path d="M144.50,681.00C169.83,681.00 195.17,681.00 220.50,681.00C271.15,681.00 321.81,678.50 372.46,678.50C423.11,678.50 473.77,680.50 524.42,680.50C575.07,680.50 625.73,679.50 676.38,679.50C727.03,679.50 777.69,681.10 828.34,681.10C878.99,681.10 929.65,679.77 980.30,678.40C1030.95,677.03 1081.61,673.30 1132.26,672.90C1182.91,672.50 1233.57,672.30 1284.22,672.30C1334.87,672.30 1385.53,673.07 1436.18,674.60C1486.83,676.13 1537.49,687.60 1588.14,687.60C1638.79,687.60 1689.45,682.60 1740.10,682.00C1790.75,681.40 1841.41,681.10 1892.06,681.10C1942.71,681.10 1993.37,812.50 2044.02,812.50C2069.51,812.50 2095.01,812.50 2120.50,812.50" fill="none" stroke="#cfe8f2" stroke-width="1.3"/><path d="M144.50,794.50C169.83,794.50 195.17,794.50 220.50,794.50C271.15,794.50 321.81,792.00 372.46,792.00C423.11,792.00 473.77,794.20 524.42,794.20C575.07,794.20 625.73,792.90 676.38,792.90C727.03,792.90 777.69,794.80 828.34,794.80C878.99,794.80 929.65,792.80 980.30,791.50C1030.95,790.20 1081.61,787.67 1132.26,787.00C1182.91,786.33 1233.57,786.00 1284.22,786.00C1334.87,786.00 1385.53,787.00 1436.18,789.00C1486.83,791.00 1537.49,800.50 1588.14,800.50C1638.79,800.50 1689.45,796.33 1740.10,796.00C1790.75,795.67 1841.41,795.50 1892.06,795.50C1942.71,795.50 1993.37,831.80 2044.02,831.80C2069.51,831.80 2095.01,831.80 2120.50,831.80" fill="none" stroke="#9b9ff7" stroke-width="2.6"/><rect x="144.5" y="838.0" width="1976.0" height="1.2" fill="#a3acb8"/><rect x="181.80" y="837.30" width="77.4" height="2.2" fill="#8e9717"/><rect x="333.76" y="837.30" width="77.4" height="2.2" fill="#8e9717"/><rect x="485.72" y="837.30" width="77.4" height="2.2" fill="#8e9717"/><rect x="637.68" y="837.30" width="77.4" height="2.2" fill="#8e9717"/><rect x="789.64" y="837.30" width="77.4" height="2.2" fill="#8e9717"/><rect x="941.60" y="728.00" width="77.4" height="70.20" fill="#8e9717"/><rect x="941.60" y="798.20" width="77.4" height="41.00" fill="#c7da2a"/><rect x="1093.56" y="728.00" width="77.4" height="70.20" fill="#8e9717"/><rect x="1093.56" y="798.20" width="77.4" height="41.00" fill="#c7da2a"/><rect x="1245.52" y="728.00" width="77.4" height="70.20" fill="#8e9717"/><rect x="1245.52" y="798.20" width="77.4" height="41.00" fill="#c7da2a"/><rect x="1397.48" y="728.00" width="77.4" height="70.20" fill="#8e9717"/><rect x="1397.48" y="798.20" width="77.4" height="41.00" fill="#c7da2a"/><rect x="1549.44" y="729.90" width="77.4" height="68.30" fill="#8e9717"/><rect x="1549.44" y="798.20" width="77.4" height="41.00" fill="#c7da2a"/><rect x="1701.40" y="728.80" width="77.4" height="69.40" fill="#8e9717"/><rect x="1701.40" y="798.20" width="77.4" height="41.00" fill="#c7da2a"/><rect x="1853.36" y="728.80" width="77.4" height="69.40" fill="#8e9717"/><rect x="1853.36" y="798.20" width="77.4" height="41.00" fill="#c7da2a"/><rect x="2005.32" y="828.90" width="77.4" height="6.60" fill="#8e9717"/><rect x="2005.32" y="835.50" width="77.4" height="3.70" fill="#c7da2a"/></svg>
<span class="t" style="left:95.00px;top:514.29px;font-size:17px;line-height:17px;color:#7f8895;transform:scaleX(0.8776);transform-origin:0 0;">1,500</span>
<span class="t" style="left:95.30px;top:618.89px;font-size:17px;line-height:17px;color:#7f8895;transform:scaleX(0.8706);transform-origin:0 0;">1,000</span>
<span class="t" style="left:107.00px;top:724.89px;font-size:17px;line-height:17px;color:#7f8895;transform:scaleX(0.8912);transform-origin:0 0;">500</span>
<span class="t" style="left:122.78px;top:829.99px;font-size:17px;line-height:17px;color:#7f8895;">0</span>
<span class="t" style="left:178.90px;top:851.09px;font-size:17px;line-height:17px;color:#7f8895;letter-spacing:-0.200px;">04/26/2023</span>
<span class="t" style="left:330.86px;top:851.09px;font-size:17px;line-height:17px;color:#7f8895;letter-spacing:-0.200px;">04/27/2023</span>
<span class="t" style="left:482.82px;top:851.09px;font-size:17px;line-height:17px;color:#7f8895;letter-spacing:-0.200px;">04/28/2023</span>
<span class="t" style="left:634.78px;top:851.09px;font-size:17px;line-height:17px;color:#7f8895;letter-spacing:-0.200px;">04/29/2023</span>
<span class="t" style="left:786.74px;top:851.09px;font-size:17px;line-height:17px;color:#7f8895;letter-spacing:-0.200px;">04/30/2023</span>
<span class="t" style="left:938.70px;top:851.09px;font-size:17px;line-height:17px;color:#7f8895;letter-spacing:-0.200px;">05/01/2023</span>
<span class="t" style="left:1090.66px;top:851.09px;font-size:17px;line-height:17px;color:#7f8895;letter-spacing:-0.200px;">05/02/2023</span>
<span class="t" style="left:1242.62px;top:851.09px;font-size:17px;line-height:17px;color:#7f8895;letter-spacing:-0.200px;">05/03/2023</span>
<span class="t" style="left:1394.58px;top:851.09px;font-size:17px;line-height:17px;color:#7f8895;letter-spacing:-0.200px;">05/04/2023</span>
<span class="t" style="left:1546.54px;top:851.09px;font-size:17px;line-height:17px;color:#7f8895;letter-spacing:-0.200px;">05/05/2023</span>
<span class="t" style="left:1698.50px;top:851.09px;font-size:17px;line-height:17px;color:#7f8895;letter-spacing:-0.200px;">05/06/2023</span>
<span class="t" style="left:1850.46px;top:851.09px;font-size:17px;line-height:17px;color:#7f8895;letter-spacing:-0.200px;">05/07/2023</span>
<span class="t" style="left:2002.42px;top:851.09px;font-size:17px;line-height:17px;color:#7f8895;letter-spacing:-0.200px;">05/08/2023</span>
<div class="a" style="left:144.1px;top:893.5px;width:31px;height:16px;background:#bfdcfb;border:1px solid #a9d0fa;border-top:3px solid #3f8ff6;box-sizing:border-box;"></div>
<span class="t" style="left:182.70px;top:892.95px;font-size:16.5px;line-height:16.5px;color:#7f8895;letter-spacing:-0.144px;">On-Demand Cost</span>
<div class="a" style="left:520.1px;top:893.5px;width:31px;height:16px;background:#e2edfc;border:1px solid #cfe0fb;border-top:3px solid #b2ccf8;box-sizing:border-box;"></div>
<span class="t" style="left:559.40px;top:892.95px;font-size:16.5px;line-height:16.5px;color:#7f8895;letter-spacing:-0.208px;">SageMaker On-Demand Cost Equivalent</span>
<div class="a" style="left:983.8px;top:893.5px;width:31px;height:16px;background:#e6d6f8;border:1px solid #d9c0f4;border-top:3px solid #a76ee3;box-sizing:border-box;"></div>
<span class="t" style="left:1022.70px;top:892.95px;font-size:16.5px;line-height:16.5px;color:#7f8895;letter-spacing:-0.286px;">ElastiCache On-Demand Cost Equivalent</span>
<div class="a" style="left:1411.1px;top:893.5px;width:31px;height:16px;background:#ebe5fc;border:1px solid #ddd2fb;border-top:3px solid #c5b5f8;box-sizing:border-box;"></div>
<span class="t" style="left:1450.00px;top:892.95px;font-size:16.5px;line-height:16.5px;color:#7f8895;letter-spacing:-0.215px;">OpenSearch On-Demand Cost Equivalent</span>
<div class="a" style="left:144.1px;top:926.6px;width:31px;height:16px;background:#e4f2f7;border:1px solid #d2e9f1;border-top:3px solid #abd9e6;box-sizing:border-box;"></div>
<span class="t" style="left:183.00px;top:926.05px;font-size:16.5px;line-height:16.5px;color:#7f8895;letter-spacing:-0.314px;">RDS On-Demand Cost Equivalent</span>
<div class="a" style="left:520.1px;top:926.6px;width:31px;height:16px;background:#fef6d8;border:1px solid #fdedb8;border-top:3px solid #fde58c;box-sizing:border-box;"></div>
<span class="t" style="left:559.40px;top:926.05px;font-size:16.5px;line-height:16.5px;color:#7f8895;letter-spacing:-0.107px;">Compute Group On-Demand Cost Equivalent</span>
<div class="a" style="left:983.8px;top:926.6px;width:16.4px;height:16.3px;background:#fca918;"></div>
<span class="t" style="left:1007.10px;top:926.05px;font-size:16.5px;line-height:16.5px;color:#7f8895;letter-spacing:-0.284px;">SageMaker Net Savings</span>
<div class="a" style="left:1411.1px;top:926.6px;width:16.4px;height:16.3px;background:#6e95ea;"></div>
<span class="t" style="left:1434.80px;top:926.05px;font-size:16.5px;line-height:16.5px;color:#7f8895;letter-spacing:-0.448px;">ElastiCache Net Savings</span>
<div class="a" style="left:144.1px;top:959.3px;width:16.4px;height:16.3px;background:#6b8796;"></div>
<span class="t" style="left:167.70px;top:958.65px;font-size:16.5px;line-height:16.5px;color:#7f8895;letter-spacing:-0.358px;">OpenSearch Net Savings</span>
<div class="a" style="left:520.1px;top:959.3px;width:16.4px;height:16.3px;background:#c7da2a;"></div>
<span class="t" style="left:543.80px;top:958.65px;font-size:16.5px;line-height:16.5px;color:#7f8895;letter-spacing:-0.548px;">RDS Net Savings</span>
<div class="a" style="left:983.8px;top:959.3px;width:16.4px;height:16.3px;background:#8e9717;"></div>
<span class="t" style="left:1007.10px;top:958.65px;font-size:16.5px;line-height:16.5px;color:#7f8895;letter-spacing:-0.095px;">Compute Group Net Savings</span>
</body></html>
